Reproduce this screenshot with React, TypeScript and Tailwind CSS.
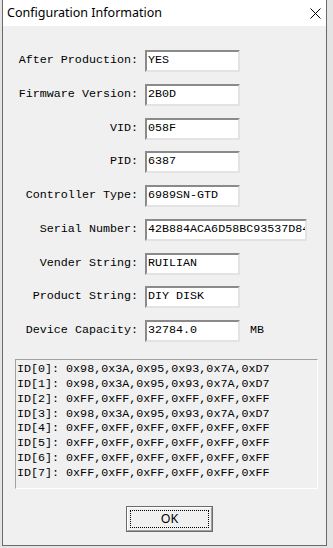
const fields = [
  { label: 'After Production:', value: 'YES' },
  { label: 'Firmware Version:', value: '2B0D' },
  { label: 'VID:', value: '058F' },
  { label: 'PID:', value: '6387' },
  { label: 'Controller Type:', value: '6989SN-GTD' },
  { label: 'Serial Number:', value: '42B884ACA6D58BC93537D84A1', wide: true },
  { label: 'Vender String:', value: 'RUILIAN' },
  { label: 'Product String:', value: 'DIY DISK' },
  { label: 'Device Capacity:', value: '32784.0', unit: 'MB' },
];

const idLines = [
  'ID[0]: 0x98,0x3A,0x95,0x93,0x7A,0xD7',
  'ID[1]: 0x98,0x3A,0x95,0x93,0x7A,0xD7',
  'ID[2]: 0xFF,0xFF,0xFF,0xFF,0xFF,0xFF',
  'ID[3]: 0x98,0x3A,0x95,0x93,0x7A,0xD7',
  'ID[4]: 0xFF,0xFF,0xFF,0xFF,0xFF,0xFF',
  'ID[5]: 0xFF,0xFF,0xFF,0xFF,0xFF,0xFF',
  'ID[6]: 0xFF,0xFF,0xFF,0xFF,0xFF,0xFF',
  'ID[7]: 0xFF,0xFF,0xFF,0xFF,0xFF,0xFF',
];

const mono = { fontFamily: '"Liberation Mono", "Courier New", monospace' };

const App = () => {
  return (
    <div className="w-[333px] h-[548px] bg-[#e4e4e4] overflow-hidden pl-[2px]">
      <div className="w-[325px] h-[546px] flex flex-col border border-[#6b6b6b] border-t-0 bg-[#f0f0f0]">
        {/* title bar */}
        <div className="h-[26px] bg-white flex items-center justify-between pl-[4px] pr-[5px]">
          <span
            className="text-[12.5px] text-black"
            style={{ fontFamily: '"Noto Sans", "Open Sans", sans-serif' }}
          >
            Configuration Information
          </span>
          <svg width="11" height="11" viewBox="0 0 11 11" className="mt-[1px]">
            <path d="M0.5 0.5 L10.5 10.5 M10.5 0.5 L0.5 10.5" stroke="#000" strokeWidth="1" />
          </svg>
        </div>

        {/* form */}
        <div className="flex flex-col gap-[11.75px] pt-[24px] text-[11.7px] text-black" style={mono}>
          {fields.map((f) => (
            <div key={f.label} className="flex items-center h-[22px]">
              <span className="w-[135px] text-right whitespace-pre">{f.label}</span>
              <div
                className={`ml-[7px] h-[22px] ${f.wide ? 'w-[162px]' : 'w-[95px]'} bg-white border-2 border-t-[#8a8a8a] border-l-[#8a8a8a] border-b-[#e3e3e3] border-r-[#e3e3e3] pl-[1px] flex items-center overflow-hidden whitespace-nowrap`}
              >
                {f.value}
              </div>
              {f.unit && <span className="ml-[10px]">{f.unit}</span>}
            </div>
          ))}
        </div>

        {/* id list */}
        <div
          className="ml-[12px] mt-[17px] w-[303px] h-[130px] border border-t-[#a0a0a0] border-l-[#a0a0a0] border-b-white border-r-white pt-[2px] pl-[1px] text-[11.7px] leading-[14.85px] text-black"
          style={mono}
        >
          {idLines.map((l) => (
            <div key={l} className="whitespace-pre">{l}</div>
          ))}
        </div>

        {/* ok button */}
        <div className="ml-[123px] mt-[17px] w-[87px] h-[26px] border border-[#6b6b6b]">
          <div className="w-full h-full border border-t-white border-l-white border-b-[#a0a0a0] border-r-[#a0a0a0] p-[2px]">
            <div
              className="w-full h-full border border-dotted border-black flex items-center justify-center text-[12.5px] text-black"
              style={{ fontFamily: '"Noto Sans", "Open Sans", sans-serif' }}
            >
              OK
            </div>
          </div>
        </div>
      </div>
    </div>
  );
};

export default App;
